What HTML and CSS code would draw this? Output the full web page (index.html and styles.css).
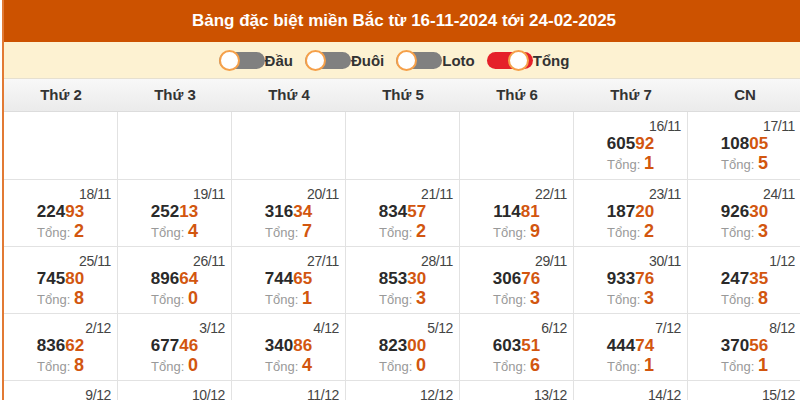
FILE: index.html
```html
<!DOCTYPE html>
<html lang="vi">
<head>
<meta charset="utf-8">
<title>Bảng đặc biệt miền Bắc</title>
<link rel="stylesheet" href="styles.css">
</head>
<body>
<div class="board">
  <div class="title">Bảng đặc biệt miền Bắc từ 16-11-2024 tới 24-02-2025</div>
  <div class="toggles">
    <label class="opt"><span class="switch"><span class="knob"></span></span>Đầu</label>
    <label class="opt"><span class="switch"><span class="knob"></span></span>Đuôi</label>
    <label class="opt"><span class="switch"><span class="knob"></span></span>Loto</label>
    <label class="opt"><span class="switch on"><span class="knob"></span></span>Tổng</label>
  </div>
  <div class="grid">
    <div class="head">Thứ 2</div><div class="head">Thứ 3</div><div class="head">Thứ 4</div><div class="head">Thứ 5</div><div class="head">Thứ 6</div><div class="head">Thứ 7</div><div class="head">CN</div>

    <div class="cell first"></div><div class="cell first"></div><div class="cell first"></div><div class="cell first"></div><div class="cell first"></div>
    <div class="cell first"><div class="date">16/11</div><div class="num">605<span>92</span></div><div class="sum">Tổng: <span>1</span></div></div>
    <div class="cell first"><div class="date">17/11</div><div class="num">108<span>05</span></div><div class="sum">Tổng: <span>5</span></div></div>

    <div class="cell"><div class="date">18/11</div><div class="num">224<span>93</span></div><div class="sum">Tổng: <span>2</span></div></div>
    <div class="cell"><div class="date">19/11</div><div class="num">252<span>13</span></div><div class="sum">Tổng: <span>4</span></div></div>
    <div class="cell"><div class="date">20/11</div><div class="num">316<span>34</span></div><div class="sum">Tổng: <span>7</span></div></div>
    <div class="cell"><div class="date">21/11</div><div class="num">834<span>57</span></div><div class="sum">Tổng: <span>2</span></div></div>
    <div class="cell"><div class="date">22/11</div><div class="num">114<span>81</span></div><div class="sum">Tổng: <span>9</span></div></div>
    <div class="cell"><div class="date">23/11</div><div class="num">187<span>20</span></div><div class="sum">Tổng: <span>2</span></div></div>
    <div class="cell"><div class="date">24/11</div><div class="num">926<span>30</span></div><div class="sum">Tổng: <span>3</span></div></div>

    <div class="cell"><div class="date">25/11</div><div class="num">745<span>80</span></div><div class="sum">Tổng: <span>8</span></div></div>
    <div class="cell"><div class="date">26/11</div><div class="num">896<span>64</span></div><div class="sum">Tổng: <span>0</span></div></div>
    <div class="cell"><div class="date">27/11</div><div class="num">744<span>65</span></div><div class="sum">Tổng: <span>1</span></div></div>
    <div class="cell"><div class="date">28/11</div><div class="num">853<span>30</span></div><div class="sum">Tổng: <span>3</span></div></div>
    <div class="cell"><div class="date">29/11</div><div class="num">306<span>76</span></div><div class="sum">Tổng: <span>3</span></div></div>
    <div class="cell"><div class="date">30/11</div><div class="num">933<span>76</span></div><div class="sum">Tổng: <span>3</span></div></div>
    <div class="cell"><div class="date">1/12</div><div class="num">247<span>35</span></div><div class="sum">Tổng: <span>8</span></div></div>

    <div class="cell"><div class="date">2/12</div><div class="num">836<span>62</span></div><div class="sum">Tổng: <span>8</span></div></div>
    <div class="cell"><div class="date">3/12</div><div class="num">677<span>46</span></div><div class="sum">Tổng: <span>0</span></div></div>
    <div class="cell"><div class="date">4/12</div><div class="num">340<span>86</span></div><div class="sum">Tổng: <span>4</span></div></div>
    <div class="cell"><div class="date">5/12</div><div class="num">823<span>00</span></div><div class="sum">Tổng: <span>0</span></div></div>
    <div class="cell"><div class="date">6/12</div><div class="num">603<span>51</span></div><div class="sum">Tổng: <span>6</span></div></div>
    <div class="cell"><div class="date">7/12</div><div class="num">444<span>74</span></div><div class="sum">Tổng: <span>1</span></div></div>
    <div class="cell"><div class="date">8/12</div><div class="num">370<span>56</span></div><div class="sum">Tổng: <span>1</span></div></div>

    <div class="cell"><div class="date">9/12</div><div class="num">512<span>37</span></div><div class="sum">Tổng: <span>0</span></div></div>
    <div class="cell"><div class="date">10/12</div><div class="num">480<span>19</span></div><div class="sum">Tổng: <span>0</span></div></div>
    <div class="cell"><div class="date">11/12</div><div class="num">736<span>52</span></div><div class="sum">Tổng: <span>7</span></div></div>
    <div class="cell"><div class="date">12/12</div><div class="num">195<span>48</span></div><div class="sum">Tổng: <span>2</span></div></div>
    <div class="cell"><div class="date">13/12</div><div class="num">620<span>73</span></div><div class="sum">Tổng: <span>0</span></div></div>
    <div class="cell"><div class="date">14/12</div><div class="num">358<span>14</span></div><div class="sum">Tổng: <span>5</span></div></div>
    <div class="cell"><div class="date">15/12</div><div class="num">807<span>29</span></div><div class="sum">Tổng: <span>1</span></div></div>
  </div>
</div>
</body>
</html>
```

FILE: styles.css
```css
html, body {
  margin: 0;
  padding: 0;
  background: #fff;
  overflow: hidden;
}
body {
  font-family: "Liberation Sans", Arial, sans-serif;
  color: #333;
}
.board {
  margin-left: 2px;
  width: 800px;
  border-left: 2px solid #e27a34;
}
.title {
  background: #cc5200;
  color: #fff;
  font-weight: bold;
  font-size: 17px;
  height: 42px;
  line-height: 42px;
  text-align: center;
}
.toggles {
  background: #fdf2d2;
  height: 36px;
  display: flex;
  justify-content: center;
  align-items: center;
  gap: 12px;
  padding-right: 20px;
  border-bottom: 1px solid #e6e0d0;
}
.opt {
  display: flex;
  align-items: center;
  font-weight: bold;
  font-size: 15px;
  color: #333;
}
.switch {
  position: relative;
  display: inline-block;
  width: 46px;
  height: 17px;
  border-radius: 9px;
  background: #808080;
}
.switch.on {
  background: #e5202a;
}
.knob {
  position: absolute;
  left: 0;
  top: -2px;
  width: 17px;
  height: 17px;
  border-radius: 50%;
  background: #fff;
  border: 2px solid #f5a04a;
}
.switch.on .knob {
  left: auto;
  right: 4px;
}
.grid {
  display: grid;
  grid-template-columns: repeat(7, 114px);
}
.head {
  height: 32px;
  line-height: 32px;
  text-align: center;
  font-weight: bold;
  font-size: 15px;
  color: #333;
  background: linear-gradient(#f8f8f8, #ebebeb);
  border-bottom: 1px solid #dcdcdc;
}
.cell {
  height: 67px;
  box-sizing: border-box;
  border-right: 1px solid #e2e2e2;
  border-bottom: 1px solid #e2e2e2;
  padding-top: 6px;
  text-align: center;
}
.cell.first {
  height: 68px;
}
.date {
  text-align: right;
  padding-right: 6px;
  font-size: 14px;
  letter-spacing: -0.4px;
  line-height: 16px;
  color: #444;
}
.num {
  font-weight: bold;
  font-size: 17px;
  line-height: 19px;
  color: #2a2a2a;
}
.num span, .sum span {
  color: #d2560f;
}
.sum {
  font-size: 13px;
  line-height: 20px;
  color: #999;
}
.sum span {
  font-weight: bold;
  font-size: 18px;
}
```
